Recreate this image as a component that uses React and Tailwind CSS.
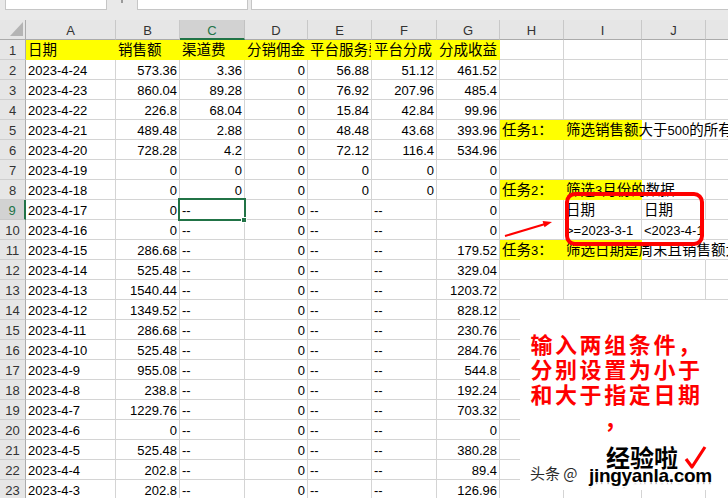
import clsx from "clsx";

const COLS = [
  { key: "A", w: "w-[90px]" },
  { key: "B", w: "w-[64px]" },
  { key: "C", w: "w-[65px]" },
  { key: "D", w: "w-[63px]" },
  { key: "E", w: "w-[64px]" },
  { key: "F", w: "w-[65px]" },
  { key: "G", w: "w-[63px]" },
  { key: "H", w: "w-[64px]" },
  { key: "I", w: "w-[78px]" },
  { key: "J", w: "w-[64px]" },
  { key: "K", w: "w-[100px]" },
];

const dash = "--";
const data = [
  ["日期", "销售额", "渠道费", "分销佣金", "平台服务费", "平台分成", "分成收益"],
  ["2023-4-24", "573.36", "3.36", "0", "56.88", "51.12", "461.52"],
  ["2023-4-23", "860.04", "89.28", "0", "76.92", "207.96", "485.4"],
  ["2023-4-22", "226.8", "68.04", "0", "15.84", "42.84", "99.96"],
  ["2023-4-21", "489.48", "2.88", "0", "48.48", "43.68", "393.96"],
  ["2023-4-20", "728.28", "4.2", "0", "72.12", "116.4", "534.96"],
  ["2023-4-19", "0", "0", "0", "0", "0", "0"],
  ["2023-4-18", "0", "0", "0", "0", "0", "0"],
  ["2023-4-17", "0", dash, "0", dash, dash, "0"],
  ["2023-4-16", "0", dash, "0", dash, dash, "0"],
  ["2023-4-15", "286.68", dash, "0", dash, dash, "179.52"],
  ["2023-4-14", "525.48", dash, "0", dash, dash, "329.04"],
  ["2023-4-13", "1540.44", dash, "0", dash, dash, "1203.72"],
  ["2023-4-12", "1349.52", dash, "0", dash, dash, "828.12"],
  ["2023-4-11", "286.68", dash, "0", dash, dash, "230.76"],
  ["2023-4-10", "525.48", dash, "0", dash, dash, "284.76"],
  ["2023-4-9", "955.08", dash, "0", dash, dash, "544.8"],
  ["2023-4-8", "238.8", dash, "0", dash, dash, "192.24"],
  ["2023-4-7", "1229.76", dash, "0", dash, dash, "703.32"],
  ["2023-4-6", "0", dash, "0", dash, dash, "0"],
  ["2023-4-5", "525.48", dash, "0", dash, dash, "380.28"],
  ["2023-4-4", "202.8", dash, "0", dash, dash, "89.4"],
  ["2023-4-3", "202.8", dash, "0", dash, dash, "126.96"],
];

// extra cells in H..K, keyed by row number
const extra = {
  5: {
    H: { v: "任务1：", y: true },
    I: { v: "筛选销售额大于500的所有数据", y: true, open: true },
    J: { open: true },
  },
  8: {
    H: { v: "任务2：", y: true },
    I: { v: "筛选3月份的数据", y: true, open: true },
  },
  9: { I: { v: "日期" }, J: { v: "日期" } },
  10: { I: { v: ">=2023-3-1" }, J: { v: "<2023-4-1", open: true } },
  11: {
    H: { v: "任务3：", y: true },
    I: { v: "筛选日期是周末且销售额大于500的数据", y: true, open: true },
    J: { open: true },
  },
};

function Txt({ s }) {
  const parts = s.split(/([\u3000-\u303f\u4e00-\u9fff\uff00-\uffef]+)/);
  return parts.map((p, i) =>
    i % 2 ? (
      <span key={i} className="text-[14.5px]">
        {p}
      </span>
    ) : (
      p
    )
  );
}

function Cell({ w, v, yellow, open, clip }) {
  const num = v && /^-?\d+(\.\d+)?$/.test(v);
  return (
    <div
      className={clsx(
        w,
        "h-[20px] shrink-0 border-r border-b whitespace-nowrap px-[2px] pt-[1px] leading-[19px]",
        yellow ? "bg-[#ffff00] border-[#ffff00]" : "border-[#d4d4d4]",
        open && "border-r-transparent",
        clip && "overflow-hidden",
        num ? "text-right" : "text-left"
      )}
    >
      {v ? <Txt s={v} /> : null}
    </div>
  );
}

function RowHead({ n, sel }) {
  return (
    <div
      className={clsx(
        "w-[26px] h-[20px] shrink-0 border-b text-center text-[13px] leading-[19px] pt-[1px]",
        sel
          ? "bg-[#d2d2d2] border-r-2 border-r-[#217346] border-b-[#c8c8c8] text-[#217346]"
          : "bg-[#e6e6e6] border-r border-r-[#ababab] border-b-[#cfcfcf] text-[#333]"
      )}
    >
      {n}
    </div>
  );
}

export default function App() {
  return (
    <div className="relative w-[728px] h-[498px] overflow-hidden bg-white text-[13px] text-black font-['Liberation_Sans','Noto_Sans_CJK_SC',sans-serif]">
      {/* formula bar strip */}
      <div className="flex h-[10px] bg-[#e9e9e9]">
        <div className="ml-[5px] w-[102px] h-[10px] bg-white border border-t-0 border-[#c6c6c6]" />
        <div className="w-[30px] flex justify-center">
          <div className="w-[2px] h-[3px] bg-[#9a9a9a]" />
        </div>
        <div className="w-[111px] h-[10px] bg-white border border-t-0 border-[#c6c6c6]" />
        <div className="ml-[3px] flex-1 h-[10px] bg-white border border-t-0 border-r-0 border-[#c6c6c6]" />
      </div>
      <div className="h-[10px] bg-[#e9e9e9]" />

      {/* column headers */}
      <div className="flex h-[20px] bg-[#e6e6e6]">
        <div className="relative w-[26px] shrink-0 border-r border-b border-[#ababab]">
          <svg className="absolute left-[10px] top-[2px]" width="13" height="14" viewBox="0 0 13 14">
            <polygon points="13,0 13,14 0,14" fill="#b4b4b4" />
          </svg>
        </div>
        {COLS.map((c) => (
          <div
            key={c.key}
            className={clsx(
              c.w,
              "shrink-0 border-r text-center text-[13px] leading-[19px] pt-[1px]",
              c.key === "C"
                ? "bg-[#d2d2d2] border-b-2 border-b-[#217346] border-r-[#c2c2c2] text-[#217346]"
                : "border-b border-b-[#ababab] border-r-[#c8c8c8] text-[#333]"
            )}
          >
            {c.key === "K" ? "" : c.key}
          </div>
        ))}
      </div>

      {/* rows */}
      {data.map((row, i) => {
        const n = i + 1;
        const ex = extra[n] || {};
        return (
          <div key={n} className="flex h-[20px]">
            <RowHead n={n} sel={n === 9} />
            {row.map((v, j) => (
              <Cell
                key={j}
                w={COLS[j].w}
                v={v}
                yellow={n === 1}
                clip={n === 1 && j === 4}
              />
            ))}
            {["H", "I", "J", "K"].map((k) => {
              const c = ex[k] || {};
              const col = COLS.find((x) => x.key === k);
              return <Cell key={k} w={col.w} v={c.v} yellow={c.y} open={c.open} />;
            })}
          </div>
        );
      })}

      {/* active cell C9 */}
      <div className="absolute left-[178px] top-[198px] w-[68px] h-[23px] border-2 border-[#217346]" />
      <div className="absolute left-[241px] top-[217px] w-[6px] h-[6px] bg-[#217346] border border-white" />

      {/* red highlight box and arrow */}
      <div className="absolute left-[565px] top-[192px] w-[139px] h-[54px] border-4 border-[#ff0000] rounded-[10px]" />
      <svg className="absolute left-[500px] top-[214px]" width="60" height="26" viewBox="0 0 60 26">
        <line x1="5" y1="22" x2="46" y2="9.7" stroke="#ff0000" strokeWidth="2" />
        <polygon points="52,8 44.5,13.2 42.6,7" fill="#ff0000" />
      </svg>

      {/* text box */}
      <div className="absolute left-[520px] top-[300px] w-[208px] h-[190px] bg-white">
        <div className="w-[193px] pt-[31px] text-center text-[22px] leading-[25px] font-bold text-[#ff0000] tracking-[2.6px] font-['Noto_Sans_CJK_SC',sans-serif]">
          <div>输入两组条件，</div>
          <div>分别设置为小于</div>
          <div>和大于指定日期</div>
          <div>，</div>
        </div>
      </div>

      {/* watermark */}
      <div className="absolute left-[530px] top-[465px] text-[15px] leading-[16px] text-[#2a2a2a] font-['Noto_Sans_CJK_SC',sans-serif] [text-shadow:-1px_-1px_0_#fff,1px_-1px_0_#fff,-1px_1px_0_#fff,1px_1px_0_#fff]">
        头条 @
      </div>
      <div className="absolute left-[606px] top-[444px] text-[24px] leading-[26px] font-bold text-black font-['Noto_Sans_CJK_SC',sans-serif] [text-shadow:-2px_-2px_0_#fff,2px_-2px_0_#fff,-2px_2px_0_#fff,2px_2px_0_#fff,0_2px_0_#fff,2px_0_0_#fff]">
        经验啦
      </div>
      <svg className="absolute left-[683px] top-[445px]" width="24" height="26" viewBox="0 0 24 26">
        <path d="M3 14 L9 22 L22 2" fill="none" stroke="#ff0000" strokeWidth="3.2" strokeLinejoin="round" />
      </svg>
      <div className="absolute left-[589px] top-[465px] text-[19px] leading-[22px] font-bold tracking-[-0.3px] text-black [text-shadow:-2px_-2px_0_#fff,2px_-2px_0_#fff,-2px_2px_0_#fff,2px_2px_0_#fff,0_2px_1px_#999]">
        jingyanla.com
      </div>
    </div>
  );
}
